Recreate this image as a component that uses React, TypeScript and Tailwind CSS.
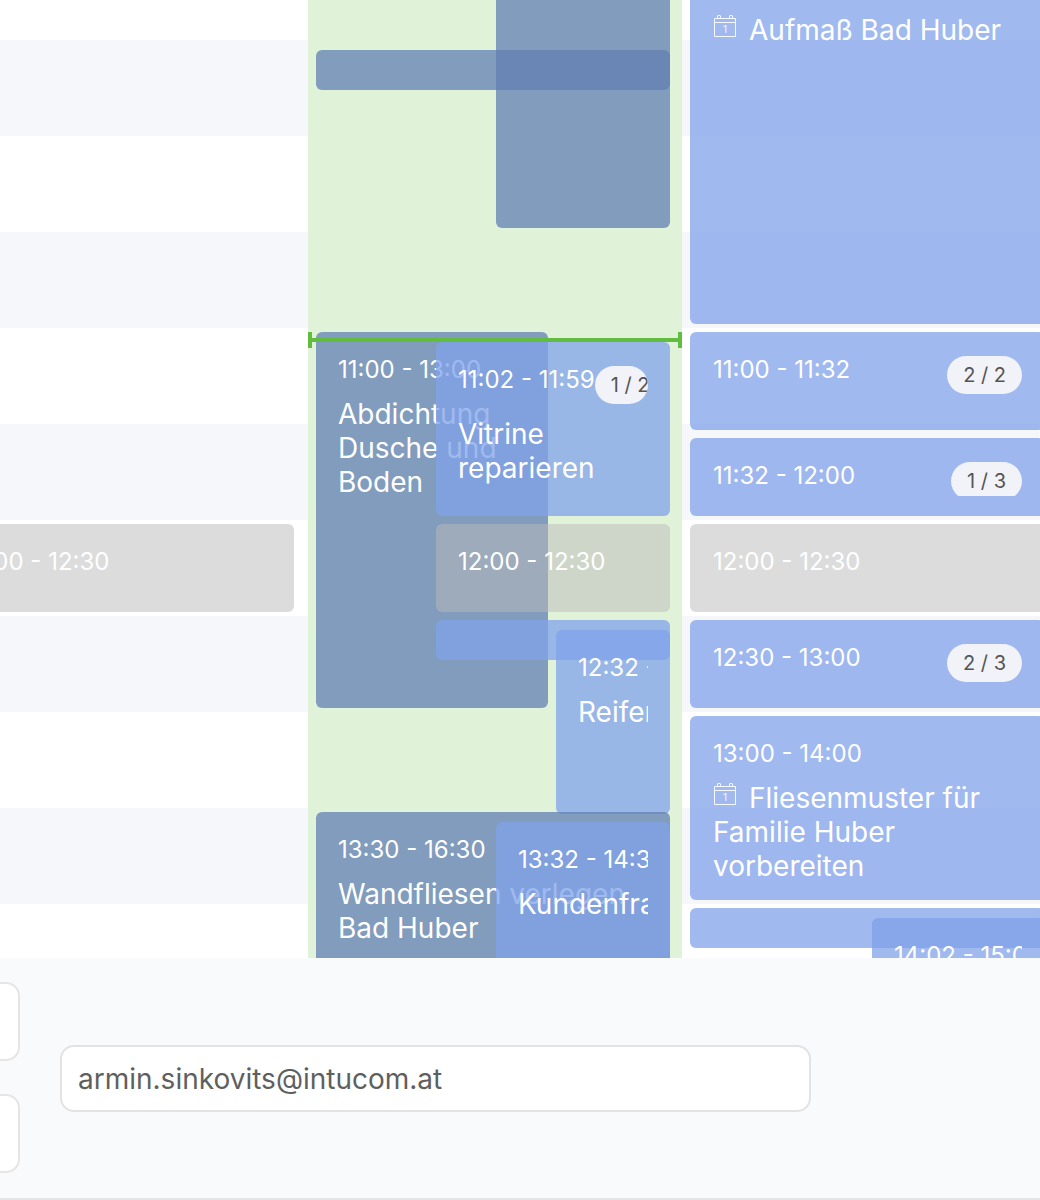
import type { ReactNode } from "react";

type Tone = "blue" | "dark" | "gray";

type EventProps = {
  left: number;
  top: number;
  width: number;
  height: number;
  tone: Tone;
  time?: string;
  title?: string;
  badge?: string;
  withIcon?: boolean;
  nudge?: boolean;
};

const toneClass: Record<Tone, string> = {
  blue: "bg-[#80a2e9]/75",
  dark: "bg-[#617fb1]/75",
  gray: "bg-[#b9b9b9]/50",
};

function CalendarIcon() {
  return (
    <svg
      width="24"
      height="24"
      viewBox="0 0 24 24"
      fill="none"
      stroke="white"
      strokeWidth="1"
      className="inline-block align-[2px] mr-3 opacity-90"
    >
      <path d="M1.5 4.5h21v18h-21z" />
      <path d="M1.5 8.5h21" />
      <path d="M4.5 4.5v-2.5a.5.5 0 0 1 .5-.5h2a.5.5 0 0 1 .5.5v2.5" />
      <path d="M16.5 4.5v-2.5a.5.5 0 0 1 .5-.5h2a.5.5 0 0 1 .5.5v2.5" />
      <text x="12" y="19" textAnchor="middle" fontSize="10" fill="white" stroke="none" fontFamily="Inter, sans-serif">
        1
      </text>
    </svg>
  );
}

function CalEvent({ left, top, width, height, tone, time, title, badge, withIcon, nudge }: EventProps) {
  return (
    <div
      className={`absolute rounded-md ${toneClass[tone]}`}
      style={{ left, top, width, height }}
    >
      <div className={`mr-[22px] mt-[21px] h-[calc(100%-41px)] overflow-hidden text-white ${nudge ? "ml-[23px]" : "ml-[22px]"}`}>
        {time && (
          <div className="flex items-start justify-between mb-[10px]">
            <span className="shrink-0 whitespace-nowrap text-2xl leading-[34px]">{time}</span>
            {badge && (
              <span className="min-w-0 overflow-hidden whitespace-nowrap rounded-full bg-[#f1f3f8] px-4 my-[3px] h-[38px] text-xl leading-[38px] text-[#555]">
                {badge}
              </span>
            )}
          </div>
        )}
        {title && (
          <div className="text-[28px] leading-[34px]">
            {withIcon && <CalendarIcon />}
            {title}
          </div>
        )}
      </div>
    </div>
  );
}

function Column({ green, children }: { green?: boolean; children?: ReactNode }) {
  return (
    <div className={`relative w-[374px] shrink-0 h-full ${green ? "bg-[#e0f3d9]" : ""}`}>
      {!green && (
        <div className="h-full flex flex-col pt-10">
          {Array.from({ length: 10 }).map((_, i) => (
            <div key={i} className={`h-24 shrink-0 ${i % 2 === 0 ? "bg-[#f6f7fb]" : "bg-white"}`} />
          ))}
        </div>
      )}
      {children}
    </div>
  );
}

export default function App() {
  return (
    <div className="w-[1040px] h-[1200px] overflow-hidden bg-white flex flex-col font-['Inter',sans-serif]">
      <div className="h-[958px] shrink-0 flex overflow-hidden -ml-[66px]">
        <Column>
          <CalEvent left={6} top={524} width={354} height={88} tone="gray" time="12:00 - 12:30" />
        </Column>

        <Column green>
          <CalEvent left={188} top={-60} width={174} height={288} tone="dark" />
          <CalEvent left={8} top={50} width={354} height={40} tone="dark" />
          <CalEvent left={8} top={332} width={232} height={376} tone="dark" time="11:00 - 13:00" title="Abdichtung Dusche und Boden" />
          <CalEvent left={128} top={342} width={234} height={174} tone="blue" time="11:02 - 11:59" title="Vitrine reparieren" badge="1 / 2" />
          <CalEvent left={128} top={524} width={234} height={88} tone="gray" time="12:00 - 12:30" />
          <CalEvent left={128} top={620} width={234} height={40} tone="blue" />
          <CalEvent left={248} top={630} width={114} height={184} tone="blue" time="12:32 - 13:30" title="Reifen" />
          <CalEvent left={8} top={812} width={354} height={200} tone="dark" time="13:30 - 16:30" title="Wandfliesen verlegen Bad Huber" />
          <CalEvent left={188} top={822} width={174} height={200} tone="blue" time="13:32 - 14:32" title="Kundenfrage" />
          {/* current time marker */}
          <div className="absolute left-0 right-0 top-[338px] h-1 bg-[#62bc3f]" />
          <div className="absolute left-0 top-[332px] h-4 w-1 bg-[#62bc3f]" />
          <div className="absolute right-0 top-[332px] h-4 w-1 bg-[#62bc3f]" />
        </Column>

        <Column>
          <CalEvent left={8} top={-52} width={354} height={376} tone="blue" time="09:00 - 11:00" title="Aufmaß Bad Huber" withIcon nudge />
          <CalEvent left={8} top={332} width={354} height={98} tone="blue" time="11:00 - 11:32" badge="2 / 2" nudge />
          <CalEvent left={8} top={438} width={354} height={78} tone="blue" time="11:32 - 12:00" badge="1 / 3" nudge />
          <CalEvent left={8} top={524} width={354} height={88} tone="gray" time="12:00 - 12:30" nudge />
          <CalEvent left={8} top={620} width={354} height={88} tone="blue" time="12:30 - 13:00" badge="2 / 3" nudge />
          <CalEvent left={8} top={716} width={354} height={184} tone="blue" time="13:00 - 14:00" title="Fliesenmuster für Familie Huber vorbereiten" withIcon nudge />
          <CalEvent left={8} top={908} width={354} height={40} tone="blue" />
          <CalEvent left={190} top={918} width={172} height={120} tone="blue" time="14:02 - 15:02" />
        </Column>
      </div>

      <div className="flex-1 flex items-center gap-10 bg-[#f9fafc] border-b-2 border-[#e5e5e5] -ml-[100px]">
        <div className="flex flex-col gap-[33px] w-[120px] shrink-0 -mt-px">
          <div className="h-[79px] rounded-[14px] bg-white border-2 border-[#e5e5e5]" />
          <div className="h-[79px] rounded-[14px] bg-white border-2 border-[#e5e5e5]" />
        </div>
        <div className="w-[751px] h-[67px] mt-px rounded-[14px] bg-white border-2 border-[#e3e3e3] px-4 flex items-center text-[28px] text-[#5f5f5f]">
          armin.sinkovits@intucom.at
        </div>
      </div>
    </div>
  );
}
